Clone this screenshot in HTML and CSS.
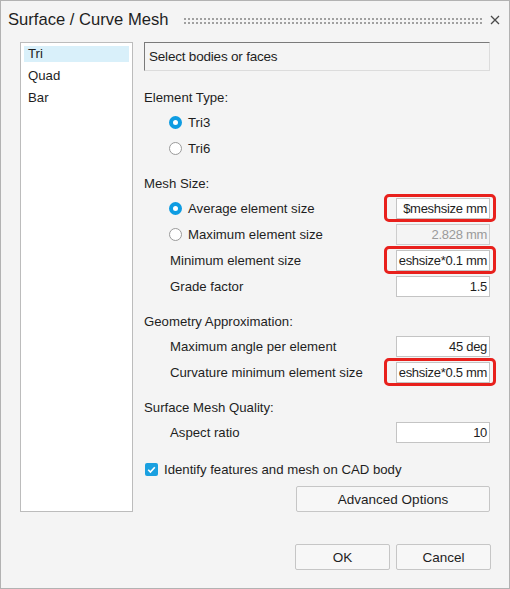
FILE: index.html
```html
<!DOCTYPE html>
<html>
<head>
<meta charset="utf-8">
<link rel="stylesheet" href="styles.css">
</head>
<body>
<div class="window">
  <div class="titlebar">
    <span class="title">Surface / Curve Mesh</span>
    <span class="grip"></span>
    <span class="close">
      <svg width="10" height="10" viewBox="0 0 10 10"><path d="M1 1L9 9M9 1L1 9" stroke="#4a4a4a" stroke-width="1.3" fill="none"/></svg>
    </span>
  </div>
  <div class="main">
    <ul class="list">
      <li class="item selected">Tri</li>
      <li class="item">Quad</li>
      <li class="item">Bar</li>
    </ul>
    <div class="form">
      <div class="selector">Select bodies or faces</div>

      <div class="section first">
        <div class="header">Element Type:</div>
        <div class="row"><span class="radio on"></span><span>Tri3</span></div>
        <div class="row"><span class="radio"></span><span>Tri6</span></div>
      </div>

      <div class="section">
        <div class="header">Mesh Size:</div>
        <div class="row"><span class="radio on"></span><span class="grow">Average element size</span>
          <div class="field annot"><div class="input"><span>$meshsize mm</span></div></div></div>
        <div class="row"><span class="radio"></span><span class="grow">Maximum element size</span>
          <div class="field"><div class="input disabled"><span>2.828 mm</span></div></div></div>
        <div class="row"><span class="label grow">Minimum element size</span>
          <div class="field annot"><div class="input"><span>eshsize*0.1 mm</span></div></div></div>
        <div class="row"><span class="label grow">Grade factor</span>
          <div class="field"><div class="input"><span>1.5</span></div></div></div>
      </div>

      <div class="section">
        <div class="header">Geometry Approximation:</div>
        <div class="row"><span class="label grow">Maximum angle per element</span>
          <div class="field"><div class="input"><span>45 deg</span></div></div></div>
        <div class="row"><span class="label grow">Curvature minimum element size</span>
          <div class="field annot"><div class="input"><span>eshsize*0.5 mm</span></div></div></div>
      </div>

      <div class="section">
        <div class="header">Surface Mesh Quality:</div>
        <div class="row"><span class="label grow">Aspect ratio</span>
          <div class="field"><div class="input"><span>10</span></div></div></div>
      </div>

      <div class="section">
        <div class="row check-row"><span class="checkbox"><svg width="13" height="13" viewBox="0 0 13 13"><path d="M3.2 6.8L5.4 9L9.8 4.2" stroke="#fff" stroke-width="1.6" fill="none"/></svg></span><span>Identify features and mesh on CAD body</span></div>
      </div>
      <button class="btn advanced">Advanced Options</button>
    </div>
  </div>
  <div class="footer">
    <button class="btn">OK</button>
    <button class="btn">Cancel</button>
  </div>
</div>
</body>
</html>
```
FILE: styles.css
```css
* { box-sizing: border-box; }
html, body { margin: 0; padding: 0; }
body {
  font-family: "Liberation Sans", Arial, sans-serif;
  font-size: 13.2px;
  color: #1e1e1e;
  background: #f4f4f4;
}
.window {
  width: 510px;
  height: 589px;
  border: 1px solid #b2b2b2;
  background: #f4f4f4;
  display: flex;
  flex-direction: column;
}
.titlebar {
  height: 37px;
  display: flex;
  align-items: center;
  padding: 0 9px 0 7px;
}
.title {
  font-size: 16.6px;
  color: #1e1e1e;
}
.grip {
  flex: 1;
  height: 6px;
  margin: 2px 8px 0 16px;
  background-image:
    linear-gradient(90deg, #a0a0a0 0 2px, transparent 2px),
    linear-gradient(90deg, #a0a0a0 0 2px, transparent 2px);
  background-size: 4px 2px, 4px 2px;
  background-position: 0 0, 0 4px;
  background-repeat: repeat-x;
}
.close {
  width: 10px;
  height: 10px;
  display: flex;
}
.main {
  display: flex;
  margin-top: 4px;
  padding: 0 18px 0 19px;
}
.list {
  list-style: none;
  margin: 0;
  padding: 0 3px;
  width: 113px;
  height: 470px;
  background: #fff;
  border: 1px solid #bcbcbc;
  flex: none;
}
.item {
  height: 22px;
  line-height: 22px;
  padding-left: 4px;
}
.item.selected {
  background-image: linear-gradient(#d9f0fa, #d9f0fa);
  background-size: 100% 16px;
  background-position: 0 3px;
  background-repeat: no-repeat;
}
.form {
  margin-left: 11px;
  width: 346px;
  display: flex;
  flex-direction: column;
}
.selector {
  height: 29px;
  border-style: solid;
  border-width: 1px;
  border-color: #7a7a7a #dcdcdc #dcdcdc #7a7a7a;
  padding-left: 4px;
  display: flex;
  align-items: center;
  font-size: 13.5px;
  letter-spacing: -0.2px;
}
.section { margin-top: 10px; }
.section.first { margin-top: 14px; }
.header {
  height: 24px;
  display: flex;
  align-items: center;
}
.row {
  height: 26px;
  display: flex;
  align-items: center;
  padding-left: 25px;
}
.label { padding-left: 1px; }
.grow { flex: 1; }
.radio {
  width: 13px;
  height: 13px;
  border-radius: 50%;
  border: 1px solid #9a9a9a;
  background: #fff;
  margin-right: 6px;
  flex: none;
}
.radio.on {
  border: 4px solid #0e9ce2;
  background: #fff;
}
.field {
  position: relative;
  width: 94px;
  height: 21px;
  flex: none;
}
.input {
  width: 100%;
  height: 100%;
  border: 1px solid #c4c4c4;
  background: #fff;
  white-space: nowrap;
  display: flex;
  justify-content: flex-end;
  align-items: center;
  padding-right: 2px;
  font-size: 13px;
  letter-spacing: -0.3px;
}
.input span { flex: none; }
.input.disabled {
  background: #f4f4f4;
  color: #9a9a9a;
  border-color: #cdcdcd;
}
.annot::after {
  content: "";
  position: absolute;
  top: -4px;
  bottom: -3px;
  left: -12px;
  right: -6px;
  border: 3px solid #e8201c;
  border-radius: 5px;
}
.check-row { padding-left: 1px; height: 28px; }
.checkbox {
  width: 13px;
  height: 13px;
  background: #1aa0e0;
  border-radius: 2px;
  margin-right: 6px;
  display: flex;
  flex: none;
}
.btn {
  font-family: inherit;
  font-size: 13.5px;
  color: #1e1e1e;
  background: #f7f7f7;
  border: 1px solid #c6c6c6;
  border-radius: 2px;
  height: 26px;
  padding: 0;
}
.advanced {
  align-self: flex-end;
  width: 194px;
  margin-top: 3px;
}
.footer {
  display: flex;
  justify-content: flex-end;
  gap: 6px;
  margin-top: 32px;
  padding-right: 18px;
}
.footer .btn { width: 95px; }
```
